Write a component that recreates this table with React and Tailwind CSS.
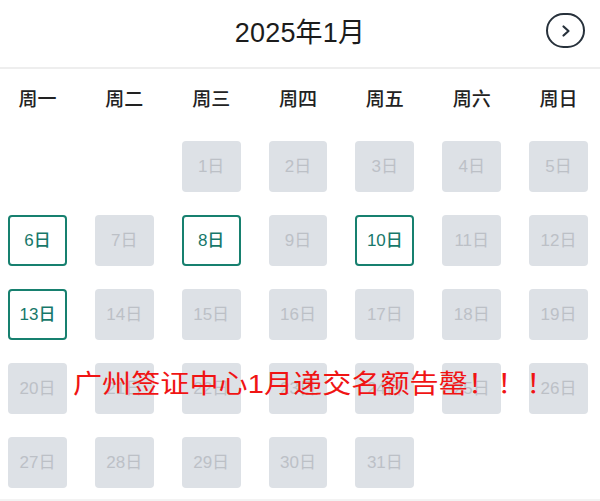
import React from 'react';

const weekdays = ['周一', '周二', '周三', '周四', '周五', '周六', '周日'];
const open = [6, 8, 10, 13];

function NextButton() {
  return (
    <button className="absolute right-[15px] top-[13px] w-[39px] h-[35px] rounded-full border-2 border-[#27313b] flex items-center justify-center">
      <svg width="12" height="14" viewBox="0 0 12 14" fill="none">
        <path d="M3.5 2.5 L8.5 7 L3.5 11.5" stroke="#27313b" strokeWidth="2.2" strokeLinecap="round" strokeLinejoin="round" />
      </svg>
    </button>
  );
}

export default function App() {
  const days = [];
  for (let i = 0; i < 2; i++) days.push(null);
  for (let d = 1; d <= 31; d++) days.push(d);

  return (
    <div className="w-[600px] h-[501px] bg-white overflow-hidden relative" style={{ fontFamily: '"Liberation Sans", "Noto Sans CJK SC", sans-serif' }}>
      <header className="relative h-[69px] border-b-2 border-[#eeeeee] flex items-center justify-center">
        <h1 className="text-[27px] text-[#1c1c1c] pb-[1px] tracking-[0.2px]">2025年1月</h1>
        <NextButton />
      </header>

      <div className="grid grid-cols-7 gap-x-[28px] pl-[8px] pr-[12px] pt-[19px] pb-[29px]">
        {weekdays.map((w) => (
          <div key={w} className="text-center text-[19px] leading-[24px] font-medium text-[#222]">{w}</div>
        ))}
      </div>

      <div className="grid grid-cols-7 gap-x-[28px] gap-y-[23px] pl-[8px] pr-[12px]">
        {days.map((d, i) =>
          d === null ? (
            <div key={'e' + i} className="h-[51px]" />
          ) : open.includes(d) ? (
            <div key={d} className="h-[51px] rounded-[4px] border-2 border-[#17806f] bg-white flex items-center justify-center text-[17px] text-[#17786a] font-medium">
              {d}日
            </div>
          ) : (
            <div key={d} className="h-[51px] rounded-[4px] bg-[#dde1e6] flex items-center justify-center text-[17px] text-[#bcc0c6]">
              {d}日
            </div>
          )
        )}
      </div>

      {/* notice stamped over the calendar */}
      <div className="absolute left-[73px] top-[367px] text-[26px] leading-[34px] text-[#f01414] whitespace-nowrap origin-left scale-x-[1.12]">
        广州签证中心1月递交名额告罄！！！
      </div>

      <div className="absolute left-0 right-0 bottom-0 h-[2px] bg-[#f3f3f3]" />
    </div>
  );
}
